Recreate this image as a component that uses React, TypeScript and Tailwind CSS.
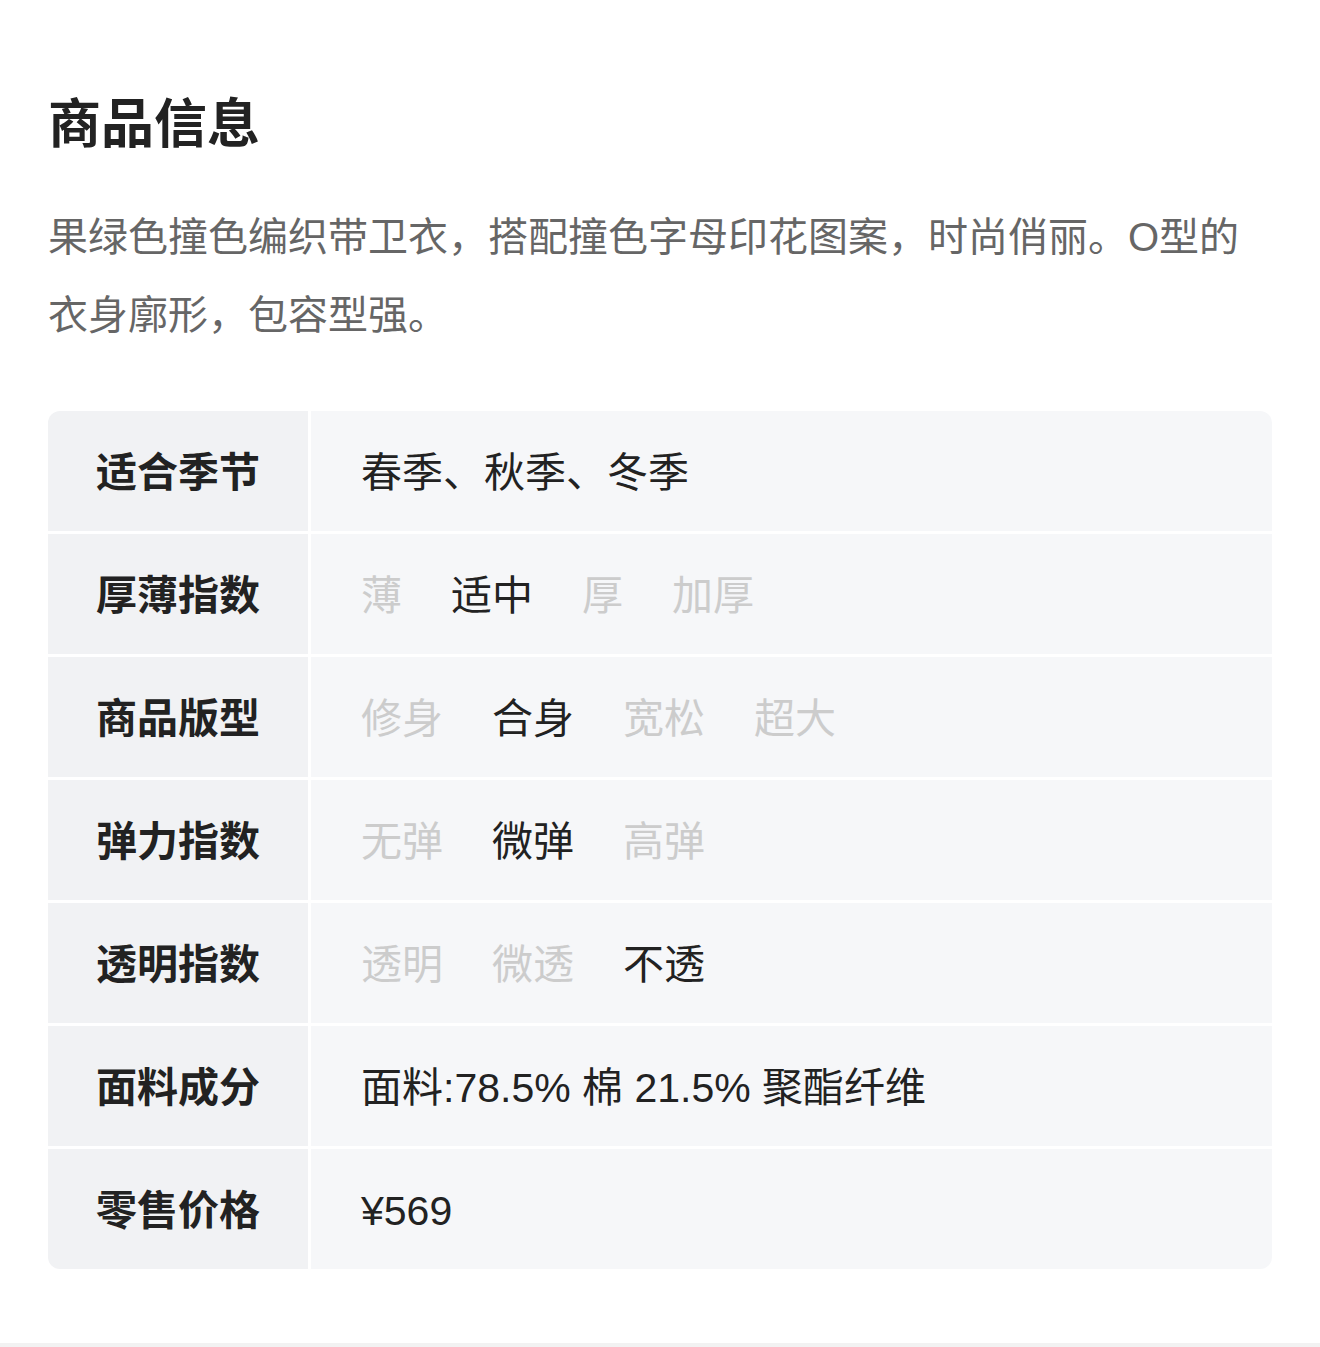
import React from "react";

type Opt = { text: string; on: boolean };

type Row = {
  label: string;
  value?: string;
  options?: Opt[];
};

const rows: Row[] = [
  { label: "适合季节", value: "春季、秋季、冬季" },
  {
    label: "厚薄指数",
    options: [
      { text: "薄", on: false },
      { text: "适中", on: true },
      { text: "厚", on: false },
      { text: "加厚", on: false },
    ],
  },
  {
    label: "商品版型",
    options: [
      { text: "修身", on: false },
      { text: "合身", on: true },
      { text: "宽松", on: false },
      { text: "超大", on: false },
    ],
  },
  {
    label: "弹力指数",
    options: [
      { text: "无弹", on: false },
      { text: "微弹", on: true },
      { text: "高弹", on: false },
    ],
  },
  {
    label: "透明指数",
    options: [
      { text: "透明", on: false },
      { text: "微透", on: false },
      { text: "不透", on: true },
    ],
  },
  { label: "面料成分", value: "面料:78.5% 棉 21.5% 聚酯纤维" },
  { label: "零售价格", value: "¥569" },
];

const font = {
  fontFamily: '"Liberation Sans", "Noto Sans CJK SC", sans-serif',
};

export default function App() {
  return (
    <div className="w-full min-h-screen bg-white" style={font}>
      <div className="px-12 pt-[87px]">
        <h1 className="text-[53px] leading-[76px] font-bold text-[#222]">
          商品信息
        </h1>
        <p className="mt-[35px] text-[40px] leading-[78px] text-[#666]">
          果绿色撞色编织带卫衣，搭配撞色字母印花图案，时尚俏丽。O型的衣身廓形，包容型强。
        </p>

        <div className="mt-[57px] grid grid-cols-[260px_1fr] gap-[3px] rounded-xl overflow-hidden bg-white">
          {rows.map((row) => (
            <React.Fragment key={row.label}>
              <div className="h-[120px] flex items-center pl-12 pt-[6px] bg-[#f1f2f4] text-[41px] font-bold text-[#222]">
                {row.label}
              </div>
              <div className="h-[120px] flex items-center pl-[50px] pt-[6px] bg-[#f6f7f9] text-[41px] text-[#222]">
                {row.value && <span>{row.value}</span>}
                {row.options && (
                  <div className="flex gap-[49px]">
                    {row.options.map((o) => (
                      <span
                        key={o.text}
                        className={o.on ? "text-[#222]" : "text-[#cccccc]"}
                      >
                        {o.text}
                      </span>
                    ))}
                  </div>
                )}
              </div>
            </React.Fragment>
          ))}
        </div>
      </div>
      <div className="mt-[74px] h-[4px] w-full bg-[#f2f2f2]" />
    </div>
  );
}
